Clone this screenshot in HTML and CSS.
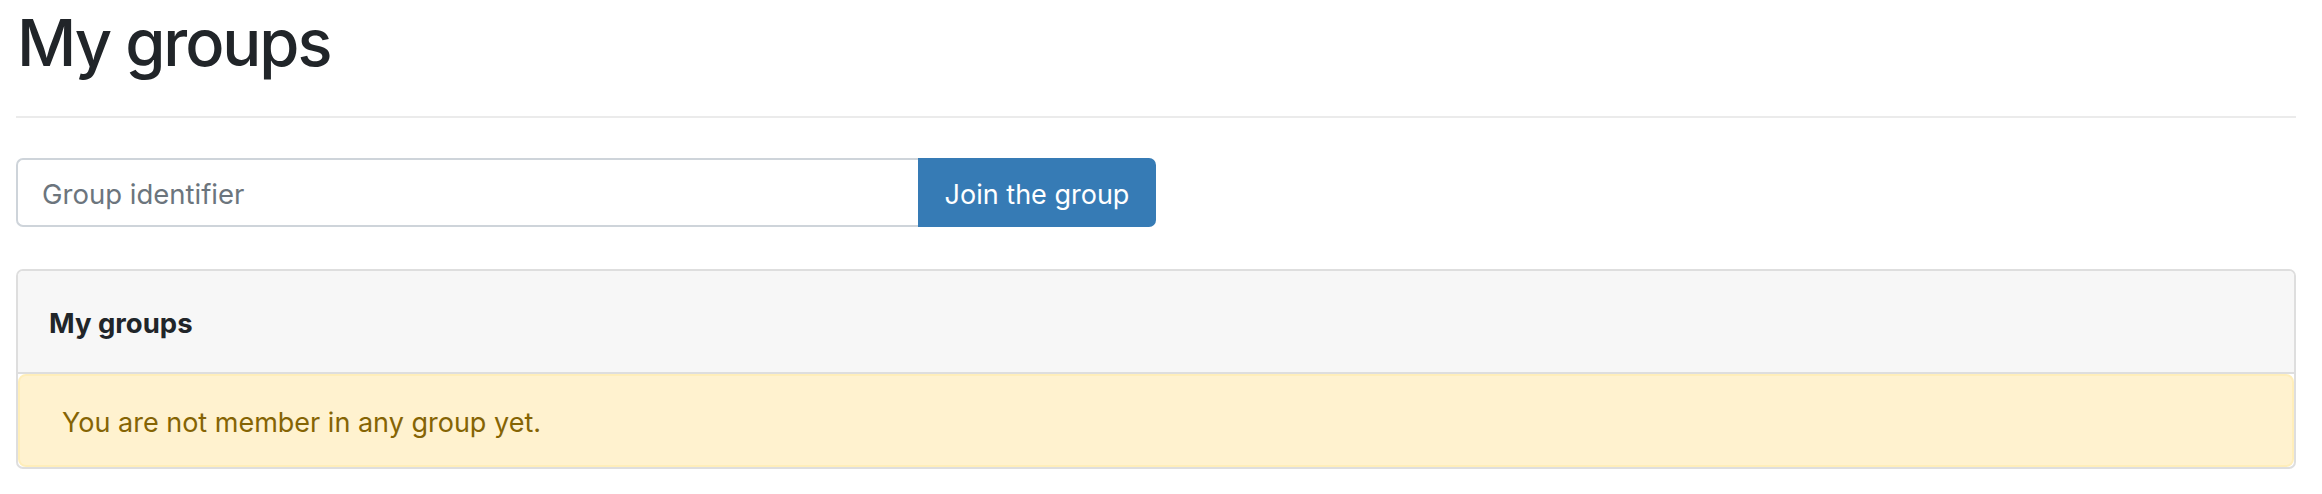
FILE: index.html
```html
<!DOCTYPE html>
<html lang="en">
<head>
<meta charset="utf-8">
<title>My groups</title>
<link rel="stylesheet" href="styles.css">
</head>
<body>
<div class="page">
  <h1 class="title">My groups</h1>
  <hr class="rule">
  <form class="join">
    <input class="join-input" type="text" placeholder="Group identifier">
    <button class="join-btn" type="button">Join the group</button>
  </form>
  <section class="card">
    <header class="card-header">My groups</header>
    <div class="alert">You are not member in any group yet.</div>
  </section>
</div>
</body>
</html>
```

FILE: styles.css
```css
html, body {
  margin: 0;
  padding: 0;
  background: #ffffff;
}

body {
  font-family: Inter, "Liberation Sans", Arial, sans-serif;
  color: #212529;
}

.page {
  width: 2280px;
  margin-left: 16px;
  display: flex;
  flex-direction: column;
}

.title {
  margin: 4px 0 0 1px;
  font-size: 65px;
  font-weight: 500;
  line-height: 78px;
  letter-spacing: -2.1px;
  color: #212529;
}

.rule {
  margin: 34px 0 0 0;
  border: 0;
  border-top: 2px solid #ebebeb;
  height: 0;
}

.join {
  margin-top: 40px;
  display: flex;
  width: 1140px;
  height: 69px;
}

.join-input {
  box-sizing: border-box;
  width: 902px;
  height: 69px;
  margin: 0;
  padding: 3px 24px 0;
  border: 2px solid #ced4da;
  border-right: 0;
  border-radius: 7px 0 0 7px;
  font-family: Inter, "Liberation Sans", Arial, sans-serif;
  font-size: 27.5px;
  color: #495057;
  background: #fff;
  outline: none;
}

.join-input::placeholder {
  color: #6c757d;
  opacity: 1;
}

.join-btn {
  box-sizing: border-box;
  width: 238px;
  height: 69px;
  margin: 0;
  padding: 3px 0 0;
  border: 0;
  border-radius: 0 7px 7px 0;
  background: #367bb5;
  color: #ffffff;
  font-family: Inter, "Liberation Sans", Arial, sans-serif;
  font-size: 27px;
}

.card {
  margin-top: 42px;
  border: 2px solid #dedede;
  border-radius: 7px;
  overflow: hidden;
  display: flex;
  flex-direction: column;
}

.card-header {
  box-sizing: border-box;
  height: 103px;
  display: flex;
  align-items: center;
  padding: 3px 0 0 31px;
  background: #f7f7f7;
  border-bottom: 2px solid #dedede;
  font-size: 27.5px;
  font-weight: 700;
  color: #212529;
}

.alert {
  box-sizing: border-box;
  height: 93px;
  display: flex;
  align-items: center;
  padding: 4px 0 0 42px;
  background: #fff2cf;
  border: 2px solid #ffeeba;
  border-radius: 8px;
  font-size: 27px;
  color: #856404;
}
```
